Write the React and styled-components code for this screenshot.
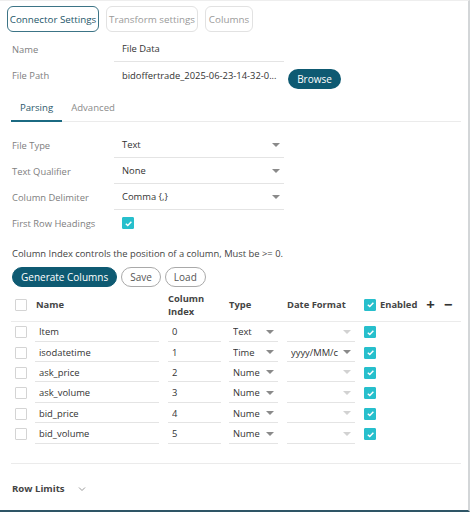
import React from 'react'
import styled, { createGlobalStyle } from 'styled-components'

const Global = createGlobalStyle`
  body {
    margin: 0;
    background: #ffffff;
    font-family: "Open Sans", "Liberation Sans", sans-serif;
    color: #333333;
  }
`

const teal = '#0e5a72'
const cyan = '#27bfcc'

const Panel = styled.div`
  width: 470px;
  height: 512px;
  box-sizing: border-box;
  border-top: 1px solid #eeeeee;
  border-right: 2px solid #d3d6d8;
  border-bottom: 2px solid #2e5566;
  padding: 5px 7px 0 11px;
  overflow: hidden;
`

const TopTabs = styled.div`
  display: flex;
  gap: 7px;
  margin-left: -4px;
`

const TopTab = styled.div`
  height: 26px;
  box-sizing: border-box;
  display: flex;
  align-items: center;
  justify-content: center;
  width: ${p => p.$w}px;
  border-radius: 6px;
  font-size: 9.8px;
  border: 1px solid ${p => (p.$active ? '#3c7486' : '#e2e2e2')};
  color: ${p => (p.$active ? '#24566a' : '#9a9a9a')};
`

const Form = styled.div`
  display: grid;
  grid-template-columns: 102px 170px auto;
  align-items: end;
  margin-top: ${p => p.$mt}px;
  padding-left: 1px;
`

const Label = styled.div`
  font-size: 9.4px;
  color: #808080;
  height: ${p => p.$h || 26}px;
  display: flex;
  align-items: center;
`

const Field = styled.div`
  height: ${p => p.$h || 26}px;
  box-sizing: border-box;
  border-bottom: ${p => (p.$line ? '1px solid #e4e4e4' : 'none')};
  display: flex;
  align-items: center;
  justify-content: space-between;
  padding: 0 4px 0 8px;
  font-size: 9.4px;
  color: #333;
  white-space: nowrap;
`

const Aside = styled.div`
  height: 27px;
  display: flex;
  align-items: center;
  padding-top: 6px;
  box-sizing: border-box;
`

const Caret = styled.span`
  flex: none;
  width: 0;
  height: 0;
  border-left: 4px solid transparent;
  border-right: 4px solid transparent;
  border-top: 4px solid ${p => (p.$light ? '#d2d2d2' : '#8a8a8a')};
`

const BrowseButton = styled.div`
  margin-left: 4px;
  width: 53px;
  height: 20px;
  border-radius: 10px;
  background: ${teal};
  color: #fff;
  font-size: 10px;
  display: flex;
  align-items: center;
  justify-content: center;
`

const SubTabs = styled.div`
  display: flex;
  margin-top: 12px;
  border-bottom: 1px solid #ebebeb;
`

const SubTab = styled.div`
  font-size: 9.6px;
  padding: 0 9px 6px 9px;
  color: ${p => (p.$active ? '#2d5a6c' : '#8c8c8c')};
  border-bottom: 2px solid ${p => (p.$active ? '#1b6a82' : 'transparent')};
  margin-bottom: -1px;
`

const Box = styled.span`
  display: inline-flex;
  align-items: center;
  justify-content: center;
  flex: none;
  width: 12px;
  height: 12px;
  box-sizing: border-box;
  border-radius: 1px;
  background: ${p => (p.$on ? cyan : '#fff')};
  border: 1px solid ${p => (p.$on ? cyan : '#d4d4d4')};
`

const Check = ({ on }) => (
  <Box $on={on}>
    {on && (
      <svg width="9" height="9" viewBox="0 0 10 10">
        <path d="M2 5.2 L4.2 7.2 L8.2 3" fill="none" stroke="#fff" strokeWidth="1.6" />
      </svg>
    )}
  </Box>
)

const Note = styled.div`
  font-size: 9.4px;
  color: #444;
  margin-top: 11px;
  margin-left: 1px;
`

const Actions = styled.div`
  display: flex;
  gap: 4px;
  margin-top: 7px;
  margin-left: 1px;
`

const Pill = styled.div`
  height: 20px;
  box-sizing: border-box;
  border-radius: 10px;
  padding: 0 8px;
  display: flex;
  align-items: center;
  font-size: 10px;
  background: ${p => (p.$primary ? teal : '#fff')};
  color: ${p => (p.$primary ? '#fff' : '#555')};
  border: 1px solid ${p => (p.$primary ? teal : '#a9a9a9')};
`

const Table = styled.div`
  margin-top: 1px;
`

const cols = '20px 124px 9px 53px 8px 49px 9px 68px 9px 16px auto'

const HeadRow = styled.div`
  display: grid;
  grid-template-columns: ${cols};
  align-items: center;
  height: 33px;
  border-bottom: 1px solid #ebebeb;
  padding-left: 4px;
`

const HeadCell = styled.div`
  font-size: 9.4px;
  font-weight: 700;
  color: #444;
  line-height: 13px;
  padding-left: ${p => p.$pad || 0}px;
`

const Row = styled.div`
  display: grid;
  grid-template-columns: ${cols};
  align-items: center;
  height: 20.4px;
  padding-left: 4px;
`

const Cell = styled.div`
  height: 19px;
  box-sizing: border-box;
  border-bottom: 1px solid #e4e4e4;
  font-size: 9.4px;
  color: #333;
  display: flex;
  align-items: center;
  gap: 4px;
  padding: 0 4px;
  white-space: nowrap;
  overflow: hidden;
`

const CellText = styled.span`
  flex: 1;
  overflow: hidden;
`

const Enabled = styled.div`
  display: flex;
  align-items: center;
  gap: 4px;
  font-size: 9.4px;
  font-weight: 700;
  color: #444;
  grid-column: 10 / 12;
`

const Sign = styled.span`
  font-size: 15px;
  font-weight: 700;
  color: #333;
  margin-left: ${p => p.$ml}px;
  line-height: 1;
`

const Divider = styled.div`
  height: 1px;
  background: #ebebeb;
  margin-top: 19px;
`

const RowLimits = styled.div`
  display: flex;
  align-items: center;
  gap: 13px;
  margin-top: 18px;
  margin-left: 1px;
  font-size: 9.6px;
  font-weight: 700;
  color: #444;
`

const rows = [
  { name: 'Item', idx: '0', type: 'Text', fmt: '' },
  { name: 'isodatetime', idx: '1', type: 'Time', fmt: 'yyyy/MM/c' },
  { name: 'ask_price', idx: '2', type: 'Nume', fmt: '' },
  { name: 'ask_volume', idx: '3', type: 'Nume', fmt: '' },
  { name: 'bid_price', idx: '4', type: 'Nume', fmt: '' },
  { name: 'bid_volume', idx: '5', type: 'Nume', fmt: '' }
]

export default function App () {
  return (
    <Panel>
      <Global />
      <TopTabs>
        <TopTab $active $w={92}>Connector Settings</TopTab>
        <TopTab $w={92}>Transform settings</TopTab>
        <TopTab $w={48}>Columns</TopTab>
      </TopTabs>

      <Form $mt={4}>
        <Label>Name</Label>
        <Field $line>File Data</Field>
        <span />
        <Label $h={27}>File Path</Label>
        <Field $h={27}>bidoffertrade_2025-06-23-14-32-0...</Field>
        <Aside><BrowseButton>Browse</BrowseButton></Aside>
      </Form>

      <SubTabs>
        <SubTab $active>Parsing</SubTab>
        <SubTab>Advanced</SubTab>
      </SubTabs>

      <Form $mt={10}>
        <Label>File Type</Label>
        <Field $line>Text<Caret /></Field>
        <span />
        <Label>Text Qualifier</Label>
        <Field $line>None<Caret /></Field>
        <span />
        <Label>Column Delimiter</Label>
        <Field $line>Comma {'{,}'}<Caret /></Field>
        <span />
        <Label>First Row Headings</Label>
        <Field><Check on /></Field>
        <span />
      </Form>

      <Note>Column Index controls the position of a column, Must be &gt;= 0.</Note>

      <Actions>
        <Pill $primary>Generate Columns</Pill>
        <Pill>Save</Pill>
        <Pill>Load</Pill>
      </Actions>

      <Table>
        <HeadRow>
          <Check />
          <HeadCell $pad={1}>Name</HeadCell>
          <span />
          <HeadCell>Column<br />Index</HeadCell>
          <span />
          <HeadCell>Type</HeadCell>
          <span />
          <HeadCell>Date Format</HeadCell>
          <span />
          <Enabled>
            <Check on />Enabled
            <Sign $ml={5}>+</Sign>
            <Sign $ml={5}>−</Sign>
          </Enabled>
        </HeadRow>
        {rows.map(r => (
          <Row key={r.name}>
            <Check />
            <Cell><CellText>{r.name}</CellText></Cell>
            <span />
            <Cell><CellText>{r.idx}</CellText></Cell>
            <span />
            <Cell><CellText>{r.type}</CellText><Caret /></Cell>
            <span />
            <Cell><CellText>{r.fmt}</CellText><Caret $light={!r.fmt} /></Cell>
            <span />
            <Check on />
          </Row>
        ))}
      </Table>

      <Divider />

      <RowLimits>
        Row Limits
        <svg width="8" height="6" viewBox="0 0 8 6">
          <path d="M1 1.5 L4 4.5 L7 1.5" fill="none" stroke="#999" strokeWidth="1" />
        </svg>
      </RowLimits>
    </Panel>
  )
}
